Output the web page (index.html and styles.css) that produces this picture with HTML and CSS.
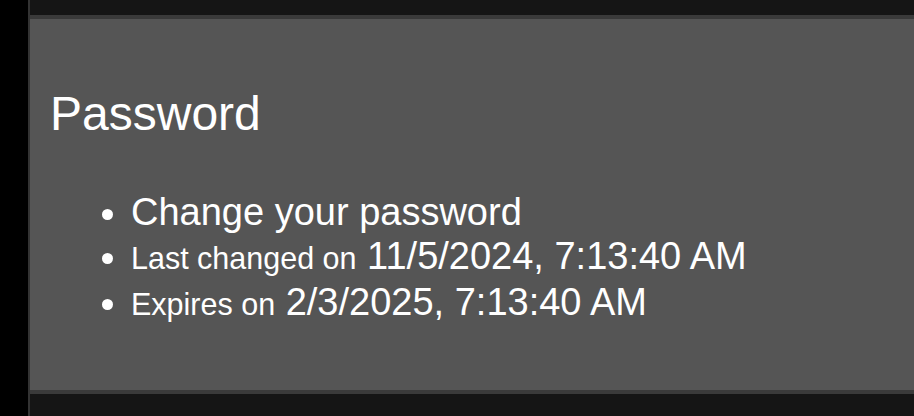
FILE: index.html
```html
<!DOCTYPE html>
<html lang="en">
<head>
    <meta charset="UTF-8">
    <meta name="viewport" content="width=device-width, initial-scale=1.0">
    <title>Account</title>
    <link rel="stylesheet" href="styles.css">
</head>
<body>
    <div class="main">
        <section class="panel">
            <h2 class="heading">Password</h2>
            <ul class="info">
                <li>Change your password</li>
                <li><small>Last changed on</small> 11/5/2024, 7:13:40 AM</li>
                <li><small>Expires on</small> 2/3/2025, 7:13:40 AM</li>
            </ul>
        </section>
    </div>
</body>
</html>
```

FILE: styles.css
```css
body {
    background-color: #000;
    margin: 0;
    height: 100vh;
    font-family: "Liberation Sans", Arial, sans-serif;
    color: #fff;
}
.main {
    margin-left: 28px;
    border-left: 2px solid #333;
    background-color: #151515;
    height: 100%;
    padding-top: 15px;
    box-sizing: border-box;
}
.panel {
    background-color: #555;
    border-top: 4px solid #3a3a3a;
    border-bottom: 4px solid #3a3a3a;
    height: 379px;
    box-sizing: border-box;
    padding: 67px 20px 0;
}
.heading {
    font-size: 48px;
    font-weight: 400;
    margin: 0;
}
.info {
    margin: 49px 0 0;
    padding-left: 81px;
    font-size: 38px;
}
.info li {
    line-height: 44px;
}
.info small {
    font-size: 30.5px;
}
```
